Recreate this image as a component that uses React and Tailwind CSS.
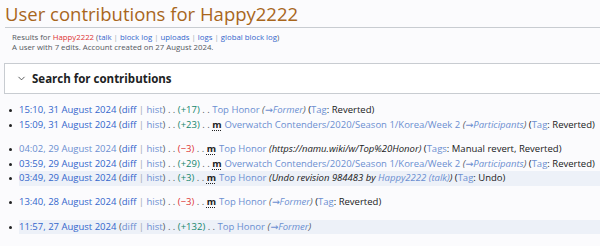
import { ChevronDown } from 'lucide-react'

const blue = 'text-[#3366cc]'
const pale = 'text-[#6b8fd1]'

function Sep() {
  return <span className="text-[#54595d]"> . . </span>
}

function Minor() {
  return (
    <span className="font-bold text-[#202122] underline decoration-dotted underline-offset-2 mr-[3px]">m</span>
  )
}

function Size({ value }) {
  const neg = value.startsWith('−')
  return <span className={neg ? 'text-[#d33]' : 'text-[#14866d]'}>({value})</span>
}

function Tags({ label = 'Tag', text }) {
  return (
    <span className="text-[#202122]">
      {' '}(<span className={pale}>{label}</span>: {text})
    </span>
  )
}

function Arrow() {
  return <span className="not-italic" style={{ fontFamily: '"DejaVu Sans", sans-serif' }}>→</span>
}

function Section({ to }) {
  return (
    <span className="italic text-[#54595d]">
      {' '}(<span className={pale}><Arrow />{to}</span>)
    </span>
  )
}

function Row({ date, dateLight, diffLight, minor, size, page, pageLight = true, children, current }) {
  return (
    <li className="flex items-start">
      <span className="w-[19px] shrink-0 flex justify-center pt-[6px] pl-[1px]">
        <span className="w-[3px] h-[3px] rounded-full bg-[#202122]" />
      </span>
      <span className={`flex-1 whitespace-nowrap overflow-hidden ${current ? 'bg-[#edf1f8]' : ''}`}>
        <span className={dateLight ? pale : blue}>{date}</span>
        <span className="text-[#54595d]"> (</span>
        <span className={diffLight ? pale : blue}>diff</span>
        <span className="text-[#a2a9b1]"> | </span>
        <span className={pale}>hist</span>
        <span className="text-[#54595d]">) </span>
        <span className="text-[#54595d]"> . . </span>
        <Size value={size} />
        <Sep />
        {minor && <Minor />}
        <span className={pageLight ? pale : blue}>{page}</span>
        {children}
      </span>
    </li>
  )
}

export default function App() {
  return (
    <div className="min-h-screen bg-[#fbfbfd] text-[#202122] overflow-hidden" style={{ fontFamily: '"Open Sans", "Liberation Sans", sans-serif' }}>
      <div className="pl-[5px]">
        <h1 className="text-[18.5px] leading-[25px] pt-[1px] text-[#a8661c] border-b border-[#c8ccd1] pb-[1px]">
          User contributions for Happy2222
        </h1>
      </div>
      <div className="pl-[12px] pt-[4px] text-[7.8px] leading-[10px] text-[#54595d]">
        <div>
          Results for <span className="text-[#d33]">Happy2222</span> (<span className={blue}>talk</span>
          <span className="text-[#a2a9b1]"> | </span>
          <span className={blue}>block log</span>
          <span className="text-[#a2a9b1]"> | </span>
          <span className={blue}>uploads</span>
          <span className="text-[#a2a9b1]"> | </span>
          <span className={blue}>logs</span>
          <span className="text-[#a2a9b1]"> | </span>
          <span className={blue}>global block log</span>)
        </div>
        <div>A user with 7 edits. Account created on 27 August 2024.</div>
      </div>
      <div className="ml-[4px] mt-[11px] -mr-[4px] h-[31px] bg-white border border-[#c8ccd1] flex items-center pl-[11px] gap-[5px]">
        <ChevronDown className="w-[11px] h-[11px] text-[#202122]" strokeWidth={1.6} />
        <span className="font-bold text-[11.5px] text-[#202122]">Search for contributions</span>
      </div>
      <div className="text-[9.5px] leading-[14.6px] pt-[9px]">
        <ul>
          <Row date="15:10, 31 August 2024" size="+17" page="Top Honor">
            <Section to="Former" />
            <Tags text="Reverted" />
          </Row>
          <Row date="15:09, 31 August 2024" size="+23" minor page="Overwatch Contenders/2020/Season 1/Korea/Week 2">
            <Section to="Participants" />
            <Tags text="Reverted" />
          </Row>
        </ul>
        <ul className="mt-[10px]">
          <Row date="04:02, 29 August 2024" dateLight size="−3" minor page="Top Honor">
            <span className="italic text-[#202122]"> (https://namu.wiki/w/Top%20Honor)</span>
            <Tags label="Tags" text="Manual revert, Reverted" />
          </Row>
          <Row date="03:59, 29 August 2024" size="+29" minor page="Overwatch Contenders/2020/Season 1/Korea/Week 2">
            <Section to="Participants" />
            <Tags text="Reverted" />
          </Row>
          <Row date="03:49, 29 August 2024" size="+3" minor page="Top Honor" current>
            <span className="italic text-[#202122]">
              {' '}(Undo revision 984483 by <span className={pale}>Happy2222</span> <span className={pale}>(talk)</span>)
            </span>
            <Tags text="Undo" />
          </Row>
        </ul>
        <ul className="mt-[9px]">
          <Row date="13:40, 28 August 2024" size="−3" minor page="Top Honor">
            <Section to="Former" />
            <Tags text="Reverted" />
          </Row>
        </ul>
        <ul className="mt-[10px]">
          <Row date="11:57, 27 August 2024" diffLight size="+132" page="Top Honor" current>
            <Section to="Former" />
          </Row>
        </ul>
      </div>
    </div>
  )
}
